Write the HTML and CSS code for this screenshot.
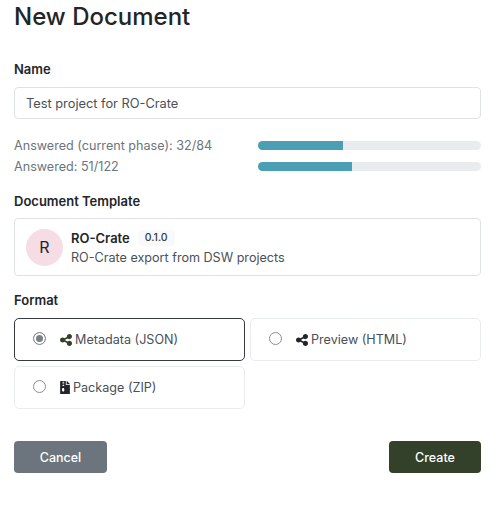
FILE: index.html
```html
<!DOCTYPE html>
<html lang="en">

<head>
    <meta charset="UTF-8">
    <meta name="viewport" content="width=device-width, initial-scale=1.0">
    <title>New Document</title>
    <link rel="stylesheet" href="styles.css">
</head>

<body>
    <h1 class="title">New Document</h1>

    <form class="doc-form">
        <label class="field-label" for="name">Name</label>
        <input class="text-input" type="text" id="name" value="Test project for RO-Crate">

        <div class="progress-list">
            <div class="progress-row">
                <span class="progress-text">Answered (current phase): 32/84</span>
                <div class="progress-track"><div class="progress-fill" style="width: 38%"></div></div>
            </div>
            <div class="progress-row">
                <span class="progress-text">Answered: 51/122</span>
                <div class="progress-track"><div class="progress-fill" style="width: 42%"></div></div>
            </div>
        </div>

        <div class="field-label template-label">Document Template</div>
        <div class="template-card">
            <div class="avatar">R</div>
            <div class="template-info">
                <div class="template-head">
                    <strong class="template-name">RO-Crate</strong>
                    <span class="version">0.1.0</span>
                </div>
                <div class="template-desc">RO-Crate export from DSW projects</div>
            </div>
        </div>

        <div class="field-label format-label">Format</div>
        <div class="format-grid">
            <label class="format-option selected">
                <span class="radio"></span>
                <svg class="icon" viewBox="0 32 448 448"><path d="M352 224c53 0 96-43 96-96s-43-96-96-96-96 43-96 96c0 4 .2 8 .7 11.900l-94.100 47C145.400 170.200 121.900 160 96 160c-53 0-96 43-96 96s43 96 96 96c25.900 0 49.400-10.200 66.600-26.900l94.100 47c-.5 3.900-.7 7.800-.7 11.900 0 53 43 96 96 96s96-43 96-96-43-96-96-96c-25.900 0-49.400 10.200-66.600 26.900l-94.100-47c.5-3.900.7-7.800.7-11.900s-.2-8-.7-11.900l94.100-47c17.200 16.700 40.700 26.900 66.600 26.900z"/></svg>
                <span>Metadata (JSON)</span>
            </label>
            <label class="format-option">
                <span class="radio"></span>
                <svg class="icon" viewBox="0 32 448 448"><path d="M352 224c53 0 96-43 96-96s-43-96-96-96-96 43-96 96c0 4 .2 8 .7 11.900l-94.100 47C145.400 170.200 121.900 160 96 160c-53 0-96 43-96 96s43 96 96 96c25.900 0 49.400-10.200 66.600-26.900l94.100 47c-.5 3.900-.7 7.800-.7 11.900 0 53 43 96 96 96s96-43 96-96-43-96-96-96c-25.900 0-49.400 10.200-66.600 26.900l-94.100-47c.5-3.900.7-7.800.7-11.900s-.2-8-.7-11.900l94.100-47c17.200 16.700 40.700 26.900 66.600 26.900z"/></svg>
                <span>Preview (HTML)</span>
            </label>
            <label class="format-option">
                <span class="radio"></span>
                <svg class="icon icon-zip" viewBox="0 0 384 512"><path d="M377 105L279.100 7c-4.500-4.500-10.600-7-17-7H256v128h128v-6.100c0-6.300-2.500-12.400-7-16.900zM224 136V0H24C10.700 0 0 10.700 0 24v464c0 13.300 10.700 24 24 24h336c13.300 0 24-10.700 24-24V160H248c-13.200 0-24-10.800-24-24zM96 32h64v32H96V32zm0 64h64v32H96V96zm0 64h64v32H96v-32zm32 256c-35 0-60-26-55-60l15-84h64l15 84c5 34-20 60-39 60z" fill-rule="evenodd"/></svg>
                <span>Package (ZIP)</span>
            </label>
        </div>

        <div class="actions">
            <button type="button" class="btn btn-cancel">Cancel</button>
            <button type="button" class="btn btn-create">Create</button>
        </div>
    </form>
</body>

</html>
```

FILE: styles.css
```css
body {
    font-family: Inter, 'Liberation Sans', sans-serif;
    margin: 0;
    padding: 0 19px 0 14px;
    background-color: #fff;
    color: #212529;
    font-size: 12.600px;
}

.title {
    font-size: 24px;
    line-height: 34px;
    font-weight: 500;
    margin: 0;
}

.doc-form {
    display: flex;
    flex-direction: column;
    margin-top: 27px;
}

.field-label {
    display: block;
    font-weight: 600;
    font-size: 13px;
    line-height: 16px;
}

.text-input {
    margin-top: 10px;
    height: 32px;
    box-sizing: border-box;
    border: 1px solid #dee2e6;
    border-radius: 4px;
    padding: 0 11px;
    font-family: inherit;
    font-size: 12.800px;
    color: #495057;
}

.progress-list {
    display: flex;
    flex-direction: column;
    gap: 5px;
    margin-top: 18px;
}

.progress-row {
    display: flex;
    align-items: center;
    height: 16px;
}

.progress-text {
    width: 244px;
    color: #6c757d;
}

.progress-track {
    flex: 1;
    height: 9px;
    border-radius: 5px;
    background-color: #e9ecef;
    overflow: hidden;
}

.progress-fill {
    height: 100%;
    background-color: #4a9fb5;
}

.template-label {
    margin-top: 19px;
}

.template-card {
    display: flex;
    align-items: center;
    gap: 8px;
    height: 58px;
    box-sizing: border-box;
    margin-top: 9px;
    padding: 0 11px;
    border: 1px solid #dee2e6;
    border-radius: 4px;
}

.avatar {
    width: 37px;
    height: 37px;
    border-radius: 50%;
    background-color: #f6dce5;
    display: flex;
    align-items: center;
    justify-content: center;
    font-size: 16px;
}

.template-head {
    display: flex;
    align-items: center;
    gap: 8px;
    height: 18px;
}

.template-name {
    font-weight: 600;
    font-size: 13px;
}

.version {
    font-size: 10.500px;
    font-weight: 500;
    line-height: 16px;
    padding: 0 7px;
    border-radius: 4px;
    background-color: #f8f9fa;
    color: #343a40;
}

.template-desc {
    margin-top: 3px;
    color: #495057;
}

.format-label {
    margin-top: 16px;
}

.format-grid {
    display: grid;
    grid-template-columns: 1fr 1fr;
    gap: 5px;
    margin-top: 10px;
}

.format-option {
    display: flex;
    align-items: center;
    height: 43px;
    box-sizing: border-box;
    padding-left: 18px;
    border: 1px solid #e9ecef;
    border-radius: 5px;
    color: #495057;
}

.format-option.selected {
    border-color: #343a40;
}

.radio {
    width: 11px;
    height: 11px;
    border: 1px solid #8a8f94;
    border-radius: 50%;
    margin-right: 14px;
    margin-top: -3px;
    background-color: #fff;
}

.selected .radio {
    background-color: #7a7f84;
    box-shadow: inset 0 0 0 2px #fff;
}

.icon {
    width: 12px;
    height: 12px;
    margin-right: 3px;
    fill: #212529;
    flex-shrink: 0;
}

.selected .icon {
    fill: #33412a;
}

.icon-zip {
    width: 10px;
    height: 13px;
}

.actions {
    display: flex;
    justify-content: space-between;
    margin-top: 32px;
}

.btn {
    height: 32px;
    width: 93px;
    border: none;
    border-radius: 4px;
    color: #fff;
    font-family: inherit;
    font-size: 12.500px;
    font-weight: 500;
    cursor: pointer;
}

.btn-cancel {
    background-color: #6c757d;
}

.btn-create {
    width: 92px;
    background-color: #33412a;
}
```
